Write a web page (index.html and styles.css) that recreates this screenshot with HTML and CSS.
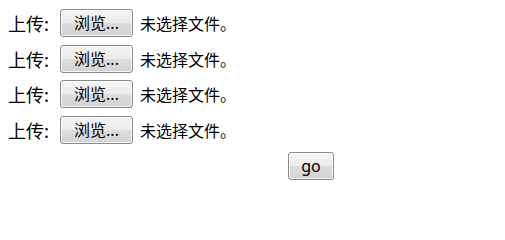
FILE: index.html
```html
<!DOCTYPE html>
<html lang="zh-CN">
<head>
<meta charset="utf-8">
<title>上传</title>
<link rel="stylesheet" href="styles.css">
</head>
<body>
<form class="upload-form">
  <div class="row">
    <label class="label">上传:</label>
    <span class="file"><button type="button" class="browse">浏览...</button><span class="status">未选择文件。</span></span>
  </div>
  <div class="row">
    <label class="label">上传:</label>
    <span class="file"><button type="button" class="browse">浏览...</button><span class="status">未选择文件。</span></span>
  </div>
  <div class="row">
    <label class="label">上传:</label>
    <span class="file"><button type="button" class="browse">浏览...</button><span class="status">未选择文件。</span></span>
  </div>
  <div class="row">
    <label class="label">上传:</label>
    <span class="file"><button type="button" class="browse">浏览...</button><span class="status">未选择文件。</span></span>
  </div>
  <div class="submit-row">
    <button type="button" class="go">go</button>
  </div>
</form>
</body>
</html>
```

FILE: styles.css
```css
html, body {
  margin: 0;
  background: #ffffff;
  color: #000000;
  font-family: "Noto Sans", "Noto Sans CJK SC", sans-serif;
}

.upload-form {
  display: flex;
  flex-direction: column;
  gap: 7.7px;
  padding: 9px 0 0 8px;
}

.row {
  display: flex;
  align-items: center;
  height: 28px;
}

.label {
  width: 52px;
  font-size: 18px;
  line-height: 28px;
  font-family: "Noto Sans CJK SC", sans-serif;
}

.file {
  display: flex;
  align-items: center;
}

.browse,
.go {
  box-sizing: border-box;
  margin: 0;
  padding: 0;
  height: 28px;
  border: 1px solid #8a8a8a;
  border-radius: 3px;
  background: linear-gradient(#f4f4f4, #ebebeb 50%, #dddddd 50%, #d2d2d2);
  box-shadow: inset 0 0 0 1px rgba(255, 255, 255, 0.75);
  color: #000000;
  font-family: "Noto Sans", "Noto Sans CJK SC", sans-serif;
  font-size: 16px;
  line-height: 24px;
}

.browse {
  width: 73px;
}

.status {
  margin-left: 7px;
  font-size: 16px;
  font-family: "Noto Sans CJK SC", sans-serif;
}

.submit-row {
  display: flex;
  padding-left: 280px;
}

.go {
  width: 46px;
}
```
